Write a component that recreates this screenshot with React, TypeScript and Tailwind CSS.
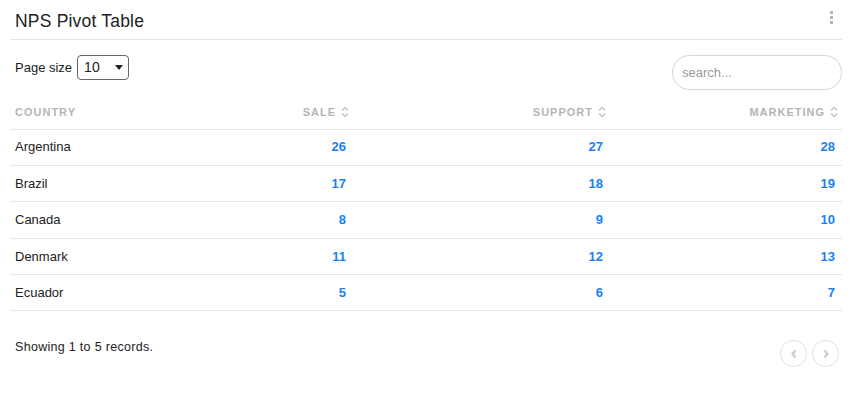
import React from 'react'

const rows = [
  { country: 'Argentina', sale: 26, support: 27, marketing: 28 },
  { country: 'Brazil', sale: 17, support: 18, marketing: 19 },
  { country: 'Canada', sale: 8, support: 9, marketing: 10 },
  { country: 'Denmark', sale: 11, support: 12, marketing: 13 },
  { country: 'Ecuador', sale: 5, support: 6, marketing: 7 },
]

function SortIcon() {
  return (
    <svg width="8" height="12" viewBox="0 0 8 12" className="ml-[5px] inline-block -mt-[2px]">
      <path d="M1 4.5 L4 1.5 L7 4.5" fill="none" stroke="#c4c4c4" strokeWidth="1.4" />
      <path d="M1 7.5 L4 10.5 L7 7.5" fill="none" stroke="#c4c4c4" strokeWidth="1.4" />
    </svg>
  )
}

function Chevron({ dir }: { dir: 'left' | 'right' }) {
  return (
    <svg width="8" height="10" viewBox="0 0 8 10">
      <path
        d={dir === 'left' ? 'M5.5 1.5 L2.5 5 L5.5 8.5' : 'M2.5 1.5 L5.5 5 L2.5 8.5'}
        fill="none"
        stroke="#cccccc"
        strokeWidth="2.2"
      />
    </svg>
  )
}

export default function App() {
  return (
    <div className="w-[855px] h-[402px] bg-white font-['Liberation_Sans',Arial,sans-serif] text-[#222]">
      <div className="pl-[10px] pr-[13px]">
        {/* header */}
        <div className="flex items-center justify-between h-[40px] border-b border-[#e6e6e6] pl-[5px] pr-[9px]">
          <h1 className="text-[17.5px] pt-[3px] tracking-[0.2px]">NPS Pivot Table</h1>
          <div className="flex flex-col gap-[2px] -mt-[4px]">
            <span className="block w-[3px] h-[3px] bg-[#b5b5b5]" />
            <span className="block w-[3px] h-[3px] bg-[#b5b5b5]" />
            <span className="block w-[3px] h-[3px] bg-[#b5b5b5]" />
          </div>
        </div>

        {/* controls */}
        <div className="flex items-start justify-between pt-[15px]">
          <div className="flex items-center pl-[5px] text-[13px]">
            <span>Page size</span>
            <div className="ml-[5px] flex items-center justify-between w-[52px] h-[25px] border border-[#666] rounded-[4px] pl-[6px] pr-[5px]">
              <span className="text-[14px]">10</span>
              <svg width="8" height="5" viewBox="0 0 8 5">
                <path d="M0 0 L8 0 L4 5 Z" fill="#222" />
              </svg>
            </div>
          </div>
          <div className="w-[170px] h-[35px] border border-[#d6d6d6] rounded-full flex items-center px-[9px] text-[13px] text-[#9a9a9a]">
            search...
          </div>
        </div>

        {/* table */}
        <table className="w-[832px] mt-[6px] table-fixed border-collapse">
          <colgroup>
            <col className="w-[180px]" />
            <col className="w-[163px]" />
            <col className="w-[257px]" />
            <col className="w-[232px]" />
          </colgroup>
          <thead>
            <tr className="border-b border-[#e6e6e6] h-[33px] text-[11px] font-bold tracking-[1px] text-[#b5b5b5]">
              <th className="text-left pl-[5px] font-bold">COUNTRY</th>
              <th className="text-right pr-[4px] font-bold">SALE<SortIcon /></th>
              <th className="text-right pr-[4px] font-bold">SUPPORT<SortIcon /></th>
              <th className="text-right pr-[4px] font-bold">MARKETING<SortIcon /></th>
            </tr>
          </thead>
          <tbody>
            {rows.map((r) => (
              <tr key={r.country} className="border-b border-[#e6e6e6] h-[36.4px] text-[13px]">
                <td className="pl-[5px]">{r.country}</td>
                <td className="text-right pr-[7px] font-bold text-[#1a7ff5]">{r.sale}</td>
                <td className="text-right pr-[7px] font-bold text-[#1a7ff5]">{r.support}</td>
                <td className="text-right pr-[7px] font-bold text-[#1a7ff5]">{r.marketing}</td>
              </tr>
            ))}
          </tbody>
        </table>

        {/* footer */}
        <div className="flex items-start justify-between pt-[26px] pl-[5px] pr-[3px]">
          <span className="text-[12.5px] pt-[1px] tracking-[0.3px]">Showing 1 to 5 records.</span>
          <div className="flex gap-[5px] pt-[3px]">
            <button className="w-[27px] h-[27px] rounded-full border border-[#dedede] flex items-center justify-center">
              <Chevron dir="left" />
            </button>
            <button className="w-[27px] h-[27px] rounded-full border border-[#dedede] flex items-center justify-center">
              <Chevron dir="right" />
            </button>
          </div>
        </div>
      </div>
    </div>
  )
}
